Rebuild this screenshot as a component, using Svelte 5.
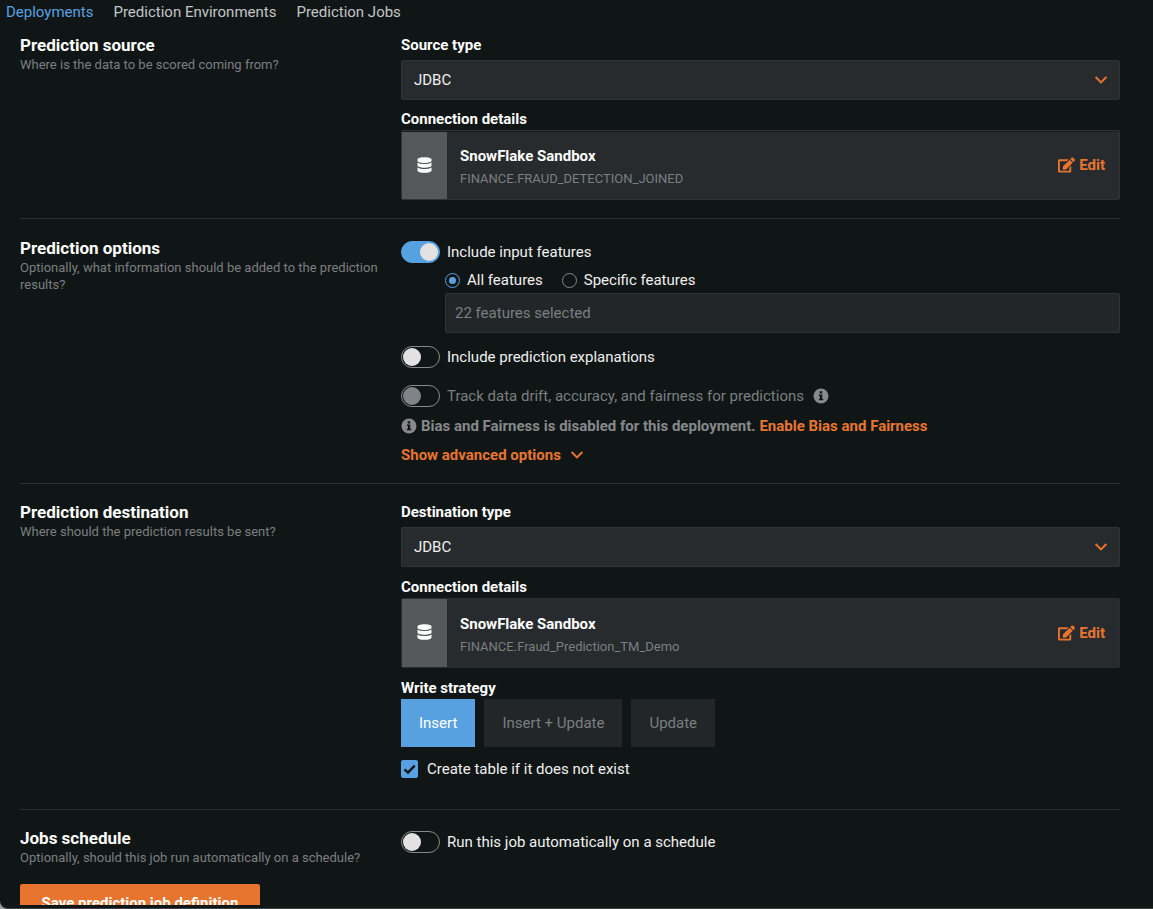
<script>
  const connections = {
    source: { name: 'SnowFlake Sandbox', table: 'FINANCE.FRAUD_DETECTION_JOINED' },
    destination: { name: 'SnowFlake Sandbox', table: 'FINANCE.Fraud_Prediction_TM_Demo' }
  };
  const tabs = ['Deployments', 'Prediction Environments', 'Prediction Jobs'];
  const strategies = ['Insert', 'Insert + Update', 'Update'];

  let activeTab = $state('Deployments');
  let strategy = $state('Insert');
  let features = $state('all');
  let includeFeatures = $state(true);
  let explanations = $state(false);
  let scheduled = $state(false);
  let createTable = $state(true);
</script>

{#snippet heading(title, text)}
  <div class="intro">
    <h2>{title}</h2>
    <p>{text}</p>
  </div>
{/snippet}

{#snippet chevron()}
  <svg class="chevron" viewBox="0 0 14 10" width="14" height="10" aria-hidden="true">
    <path d="M1.6 2 L7 7.4 L12.4 2" />
  </svg>
{/snippet}

{#snippet info()}
  <svg class="info" viewBox="0 0 16 16" width="16" height="16" aria-hidden="true">
    <circle cx="8" cy="8" r="7.5" />
    <path d="M6.7 3.2h2.5v2.3H6.7zM5.9 6.5h3.3v4.3h1v1.5H5.9v-1.5h1V8h-1z" />
  </svg>
{/snippet}

{#snippet typeField(id, label)}
  <label class="label" for={id}>{label}</label>
  <div class="select">
    <select {id}><option>JDBC</option></select>
    {@render chevron()}
  </div>
{/snippet}

{#snippet connection(item)}
  <h3 class="label">Connection details</h3>
  <div class="card">
    <div class="card-icon">
      <svg viewBox="0 0 14 16" width="15" height="16" aria-hidden="true">
        <path d="M0 2.6C0 1.2 3 .3 7 .3s7 .9 7 2.3v1.100C14 5 11 5.900 7 5.900S0 5 0 3.700z" />
        <path d="M0 5.600C1.600 6.700 4.200 7.100 7 7.100s5.400-.4 7-1.500v3c0 1.300-3 2.200-7 2.200s-7-.9-7-2.200z" />
        <path d="M0 10.500C1.600 11.600 4.200 12 7 12s5.400-.4 7-1.500v2.900c0 1.400-3 2.300-7 2.300s-7-.9-7-2.300z" />
      </svg>
    </div>
    <div class="card-text">
      <strong>{item.name}</strong>
      <span>{item.table}</span>
    </div>
    <button class="link" type="button">
      <svg viewBox="0 0 576 512" width="17" height="16" aria-hidden="true">
        <path d="M402.600 83.200l90.200 90.200c3.800 3.800 3.800 10 0 13.800L274.400 405.600l-92.800 10.300c-12.400 1.400-22.900-9.100-21.500-21.500l10.300-92.800L388.800 83.200c3.800-3.800 10-3.800 13.800 0zm162-22.900l-48.800-48.800c-15.200-15.200-39.900-15.200-55.200 0l-35.400 35.400c-3.800 3.800-3.800 10 0 13.800l90.200 90.200c3.800 3.800 10 3.800 13.800 0l35.400-35.400c15.200-15.300 15.200-40 0-55.200zM384 346.200V448H64V128h229.800c3.200 0 6.200-1.300 8.500-3.500l40-40c7.600-7.600 2.200-20.500-8.500-20.500H48C21.500 64 0 85.500 0 112v352c0 26.500 21.500 48 48 48h352c26.500 0 48-21.500 48-48V306.200c0-10.700-12.900-16-20.500-8.500l-40 40c-2.200 2.300-3.500 5.300-3.500 8.500z" />
      </svg>
      Edit
    </button>
  </div>
{/snippet}

<div class="window">
  <nav>
    {#each tabs as tab}
      <a href="#top" class:active={tab === activeTab} onclick={() => (activeTab = tab)}>{tab}</a>
    {/each}
  </nav>

  <main>
    <section class="source">
      {@render heading('Prediction source', 'Where is the data to be scored coming from?')}
      <div class="fields">
        {@render typeField('source-type', 'Source type')}
        {@render connection(connections.source)}
      </div>
    </section>

    <section>
      {@render heading(
        'Prediction options',
        'Optionally, what information should be added to the prediction results?'
      )}
      <div class="fields options">
        <label class="row"><input class="toggle" type="checkbox" role="switch" bind:checked={includeFeatures} />Include input features</label>
        <div class="nested">
          <div class="radios">
            <label class="row"><input type="radio" name="features" value="all" bind:group={features} />All features</label>
            <label class="row"><input type="radio" name="features" value="specific" bind:group={features} />Specific features</label>
          </div>
          <input class="text" type="text" aria-label="Features" placeholder="22 features selected" disabled />
        </div>
        <label class="row explain"><input class="toggle" type="checkbox" role="switch" bind:checked={explanations} />Include prediction explanations</label>
        <div class="track">
          <label class="row"><input class="toggle" type="checkbox" role="switch" disabled />Track data drift, accuracy, and fairness for predictions</label>
          {@render info()}
        </div>
        <p class="notice">
          {@render info()}
          <span>Bias and Fairness is disabled for this deployment. <a href="#fairness">Enable Bias and Fairness</a></span>
        </p>
        <button class="link advanced" type="button">Show advanced options {@render chevron()}</button>
      </div>
    </section>

    <section>
      {@render heading('Prediction destination', 'Where should the prediction results be sent?')}
      <div class="fields destination">
        {@render typeField('destination-type', 'Destination type')}
        {@render connection(connections.destination)}
        <h3 class="label">Write strategy</h3>
        <div class="strategies">
          {#each strategies as item}
            <button type="button" class:selected={item === strategy} onclick={() => (strategy = item)}>{item}</button>
          {/each}
        </div>
        <label class="row create">
          <span class="check">
            <input type="checkbox" bind:checked={createTable} />
            <svg viewBox="0 0 17 18" width="17" height="18" aria-hidden="true"><path d="M3.500 9.300 L7 12.600 L13.700 5.700" /></svg>
          </span>
          Create table if it does not exist
        </label>
      </div>
    </section>

    <section>
      {@render heading('Jobs schedule', 'Optionally, should this job run automatically on a schedule?')}
      <div class="fields options">
        <label class="row"><input class="toggle" type="checkbox" role="switch" bind:checked={scheduled} />Run this job automatically on a schedule</label>
      </div>
    </section>

    <button class="save" type="button">Save prediction job definition</button>
  </main>
</div>

<style>
  :global(body) {
    background: #9a9d9f;
  }

  .window {
    --bg: #101616;
    --field: #272b2d;
    --line: #303436;
    --orange: #e8752f;
    --blue: #58a1e0;
    --muted: #7b7f81;
    box-sizing: border-box;
    display: flex;
    flex-direction: column;
    height: 100vh;
    padding-bottom: 3px;
    overflow: hidden;
    background: var(--bg);
    border-bottom: 1px solid #3c4042;
    border-bottom-left-radius: 8px;
    color: #f0f0f0;
    font: 15px/22px Roboto, sans-serif;
  }

  h2, h3, p {
    margin: 0;
  }

  button, select, input {
    font: inherit;
  }

  button {
    border: 0;
    cursor: pointer;
  }

  a {
    color: var(--orange);
    text-decoration: none;
  }

  nav {
    display: flex;
    flex: none;
    gap: 20px;
    padding: 1px 6px 11px;
  }

  nav a {
    color: #c3c5c6;
  }

  nav a.active {
    color: var(--blue);
  }

  main {
    flex: 1;
    min-height: 0;
    padding: 0 33px 0 20px;
    overflow: hidden;
  }

  section {
    display: grid;
    grid-template-columns: 365px minmax(0, 1fr);
    gap: 16px;
    padding: 17px 0;
    border-bottom: 1px solid #2a2f30;
  }

  section.source {
    padding: 0 0 18px;
  }

  section.source + section {
    padding-top: 18px;
  }

  section:last-of-type {
    padding-bottom: 18px;
    border: 0;
  }

  h2 {
    color: #fff;
    font-size: 17px;
    font-weight: 700;
    line-height: 22px;
  }

  .intro p {
    color: var(--muted);
    font-size: 13px;
    line-height: 17px;
  }

  .label {
    display: block;
    color: #fff;
    font-size: 15px;
    font-weight: 700;
    line-height: 22px;
  }

  h3.label {
    margin-top: 8px;
  }

  .destination > h3.label {
    margin-top: 9px;
  }

  .select {
    display: grid;
    align-items: center;
    margin-top: 4px;
  }

  .select > :global(*) {
    grid-area: 1 / 1;
  }

  select {
    appearance: none;
    box-sizing: border-box;
    width: 100%;
    height: 40px;
    padding: 0 12px;
    background: var(--field);
    border: 1px solid var(--line);
    border-radius: 2px;
    color: #f0f0f0;
  }

  .chevron {
    fill: none;
    stroke: var(--orange);
    stroke-width: 2;
  }

  .select .chevron {
    justify-self: end;
    margin-right: 12px;
    pointer-events: none;
  }

  .card {
    box-sizing: border-box;
    display: flex;
    align-items: center;
    height: 70px;
    padding-right: 14px;
    background: var(--field);
    border: 1px solid var(--line);
    border-radius: 2px;
  }

  .source .card {
    box-shadow: inset 0 1px #161b1c;
  }

  .source .card-icon {
    margin-top: 1px;
  }

  .destination .card {
    border-color: #2a2e30;
  }

  .card-icon {
    box-sizing: border-box;
    display: grid;
    place-items: center;
    align-self: stretch;
    width: 45px;
    padding-bottom: 2px;
    background: #55585a;
    fill: #fff;
  }

  .card-text {
    display: flex;
    flex: 1;
    flex-direction: column;
    gap: 1px;
    padding: 4px 0 0 13px;
  }

  .card-text strong {
    color: #fff;
    font-weight: 700;
  }

  .card-text span {
    color: var(--muted);
    font-size: 13px;
  }

  .link {
    display: flex;
    align-items: center;
    gap: 4px;
    padding: 0;
    background: none;
    color: var(--orange);
    fill: var(--orange);
    font-weight: 700;
  }

  .row {
    display: flex;
    align-items: center;
    gap: 7px;
  }

  .options {
    padding-top: 4px;
  }

  .toggle {
    appearance: none;
    box-sizing: border-box;
    display: flex;
    flex: none;
    align-items: center;
    width: 39px;
    height: 22px;
    margin: 0;
    padding: 1px;
    border: 1px solid #86898b;
    border-radius: 11px;
  }

  .toggle::before {
    width: 18px;
    height: 18px;
    border-radius: 50%;
    background: #e2e2e2;
    content: '';
  }

  .toggle:checked {
    justify-content: flex-end;
    background: var(--blue);
    border-color: var(--blue);
  }

  .toggle:disabled::before {
    background: #808387;
  }

  .nested {
    margin: 6px 0 0 44px;
  }

  .radios {
    display: flex;
    gap: 19px;
    margin-bottom: 2px;
  }

  input[type='radio'] {
    appearance: none;
    box-sizing: border-box;
    display: grid;
    place-items: center;
    width: 15px;
    height: 15px;
    margin: 0;
    border: 1px solid #86898b;
    border-radius: 50%;
  }

  input[type='radio']:checked {
    border-color: var(--blue);
  }

  input[type='radio']:checked::before {
    width: 7px;
    height: 7px;
    border-radius: 50%;
    background: var(--blue);
    content: '';
  }

  .text {
    box-sizing: border-box;
    display: block;
    width: 100%;
    height: 40px;
    padding: 0 9px;
    background: #222628;
    border: 1px solid var(--line);
    border-radius: 2px;
  }

  .text::placeholder {
    color: var(--muted);
    opacity: 1;
  }

  .explain {
    margin-top: 13px;
  }

  .track {
    display: flex;
    align-items: center;
    gap: 9px;
    margin-top: 17px;
    color: var(--muted);
  }

  .info {
    flex: none;
    fill: #86898d;
  }

  .info path {
    fill: var(--bg);
  }

  .notice {
    display: flex;
    align-items: center;
    gap: 4px;
    margin-top: 8px;
    color: #86898b;
    font-weight: 700;
  }

  .advanced {
    gap: 9px;
    margin-top: 7px;
  }

  .strategies {
    display: flex;
    gap: 9px;
  }

  .strategies button {
    height: 48px;
    padding: 0 18px;
    background: #222628;
    color: var(--muted);
  }

  .strategies .selected {
    background: var(--blue);
    color: #fff;
  }

  .create {
    gap: 9px;
    margin-top: 11px;
  }

  .destination {
    padding-bottom: 12px;
  }

  .check {
    display: grid;
  }

  .check > * {
    grid-area: 1 / 1;
  }

  .check input {
    appearance: none;
    width: 17px;
    height: 18px;
    margin: 0;
    border: 1px solid var(--blue);
    border-radius: 2px;
    box-sizing: border-box;
  }

  .check input:checked {
    background: var(--blue);
  }

  .check svg {
    fill: none;
    pointer-events: none;
    stroke: var(--bg);
    stroke-width: 2.4;
  }

  .check input:not(:checked) + svg {
    visibility: hidden;
  }

  .save {
    width: 240px;
    height: 38px;
    padding: 0;
    background: var(--orange);
    border-radius: 2px;
    color: #fff;
    font-weight: 700;
  }
</style>
